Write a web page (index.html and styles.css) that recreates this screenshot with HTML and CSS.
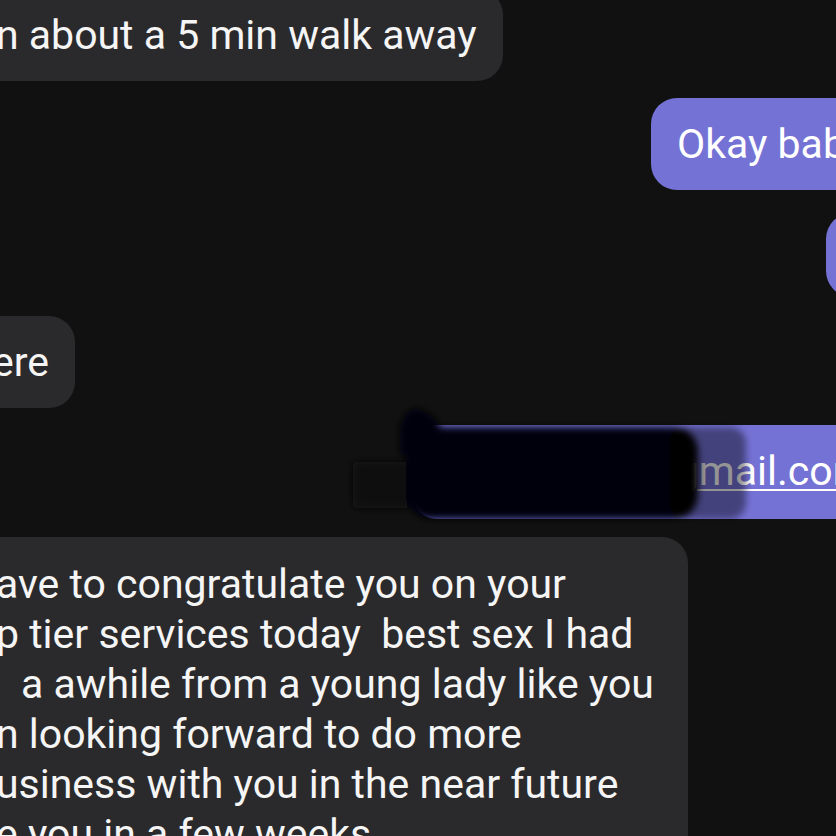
FILE: index.html
```html
<!DOCTYPE html>
<html lang="en">
<head>
  <meta charset="UTF-8">
  <meta name="viewport" content="width=device-width, initial-scale=1.0">
  <title>Messages</title>
  <link rel="stylesheet" href="styles.css">
</head>
<body>
  <div class="chat">
    <div class="row row-1">
      <div class="bubble incoming">n about a 5 min walk away</div>
    </div>
    <div class="row row-2">
      <div class="bubble outgoing okay">Okay baby</div>
    </div>
    <div class="row row-3">
      <div class="bubble outgoing stub">Yes</div>
    </div>
    <div class="row row-4">
      <div class="bubble incoming">ere</div>
    </div>
    <div class="row row-5">
      <div class="bubble outgoing email"><span class="link">@gmail.com</span></div>
    </div>
    <div class="row row-6">
      <div class="bubble incoming long">
        <div class="line">ave to congratulate you on your</div>
        <div class="line">p tier services today&nbsp; best sex I had</div>
        <div class="line indent">a awhile from a young lady like you</div>
        <div class="line">n looking forward to do more</div>
        <div class="line">usiness with you in the near future</div>
        <div class="line">e you in a few weeks</div>
      </div>
    </div>
  </div>

  <!-- gribouillage qui cache l'adresse -->
  <svg class="scribble" width="430" height="140" viewBox="0 0 430 140">
    <defs>
      <filter id="soft" x="-10%" y="-20%" width="120%" height="140%">
        <feGaussianBlur stdDeviation="3.5"/>
      </filter>
    </defs>
    <g filter="url(#soft)">
      <rect x="13" y="69" width="80" height="46" rx="4" fill="#0b0b0c" opacity="0.9"/>
      <path d="M60 34 Q66 12 80 16 Q94 20 102 36 L102 62 L60 62 Z" fill="#060607"/>
      <rect x="66" y="34" width="292" height="92" rx="24" fill="#040308"/>
      <rect x="330" y="34" width="76" height="92" rx="16" fill="#000000" opacity="0.42"/>
    </g>
  </svg>
</body>
</html>
```

FILE: styles.css
```css
body {
  margin: 0;
  height: 836px;
  overflow: hidden;
  background-color: #111111;
  color: #f5f5f5;
  font-family: Roboto, "Noto Sans", sans-serif;
  position: relative;
}

.chat {
  display: flex;
  flex-direction: column;
  margin-top: -11px;
}

.row {
  display: flex;
  white-space: nowrap;
}

.bubble {
  font-size: 41px;
  line-height: 44px;
  padding: 24px 26px;
  border-radius: 26px;
}

.incoming {
  background-color: #2a2a2c;
  margin-left: -40px;
  padding-left: 36px;
}

.outgoing {
  background-color: #7572d5;
  color: #ffffff;
}

.row-2 {
  margin-top: 17px;
}

.row-2 .bubble {
  margin-left: 651px;
}

.row-3 {
  margin-top: 23px;
}

.row-3 .bubble {
  margin-left: 826px;
  padding-top: 20px;
  padding-bottom: 20px;
}

.row-4 {
  margin-top: 19px;
}

.row-4 .bubble {
  padding-left: 32px;
}

.row-5 {
  margin-top: 17px;
}

.row-5 .bubble {
  margin-left: 413px;
  padding-left: 226px;
  padding-bottom: 26px;
  border-radius: 24px 0 0 24px;
}

.link {
  text-decoration: underline;
  text-decoration-thickness: 2px;
  text-underline-offset: 4px;
}

.row-6 {
  margin-top: 18px;
}

.long {
  padding-top: 22px;
  padding-right: 34px;
  font-size: 41px;
  line-height: 50px;
  border-radius: 26px 26px 0 0;
}

.indent {
  padding-left: 25px;
}

.scribble {
  position: absolute;
  top: 393px;
  left: 340px;
}
```
